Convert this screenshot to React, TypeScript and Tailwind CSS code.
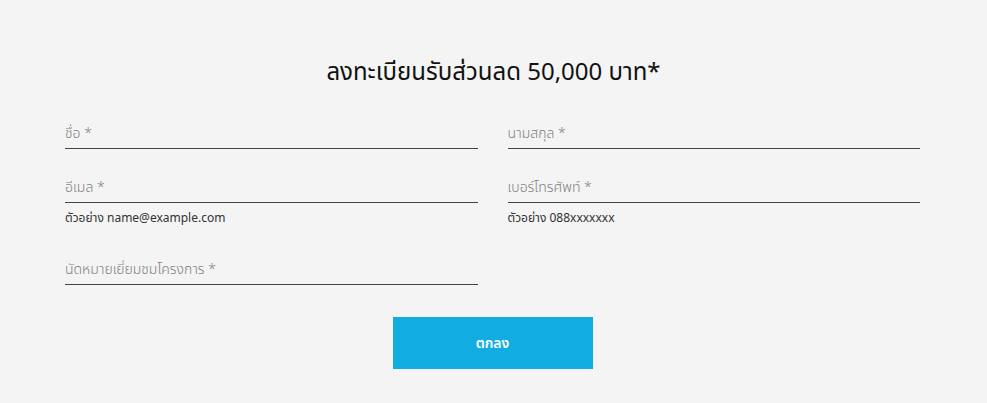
import React from "react";

function Field({ label, helper }: { label: string; helper?: string }) {
  return (
    <div className="flex flex-col">
      <div className="h-[26px] border-b border-[#444] flex items-end pb-[7px] text-[14px] leading-none text-[#808080] font-light">
        {label}
      </div>
      {helper ? (
        <div className="mt-[9px] text-[12px] leading-none text-[#333]">{helper}</div>
      ) : null}
    </div>
  );
}

export default function App() {
  return (
    <div
      className="w-[987px] h-[403px] bg-[#f4f4f4] flex flex-col items-center"
      style={{ fontFamily: '"Noto Sans Thai", "Noto Sans", "Liberation Sans", sans-serif' }}
    >
      <h1 className="mt-[58px] text-[24px] leading-[30px] text-[#111] font-normal">
        ลงทะเบียนรับส่วนลด 50,000 บาท*
      </h1>
      <div className="mt-[35px] w-[855px] -translate-x-[1px] grid grid-cols-2 gap-x-[30px]">
        <Field label="ชื่อ *" />
        <Field label="นามสกุล *" />
        <div className="mt-[28px]">
          <Field label="อีเมล *" helper="ตัวอย่าง name@example.com" />
        </div>
        <div className="mt-[28px]">
          <Field label="เบอร์โทรศัพท์ *" helper="ตัวอย่าง 088xxxxxxx" />
        </div>
        <div className="mt-[35px]">
          <Field label="นัดหมายเยี่ยมชมโครงการ *" />
        </div>
        <div />
      </div>
      <button className="mt-[32px] -translate-x-[1px] w-[200px] h-[52px] bg-[#12ade0] text-white text-[14px] font-semibold">
        ตกลง
      </button>
    </div>
  );
}
